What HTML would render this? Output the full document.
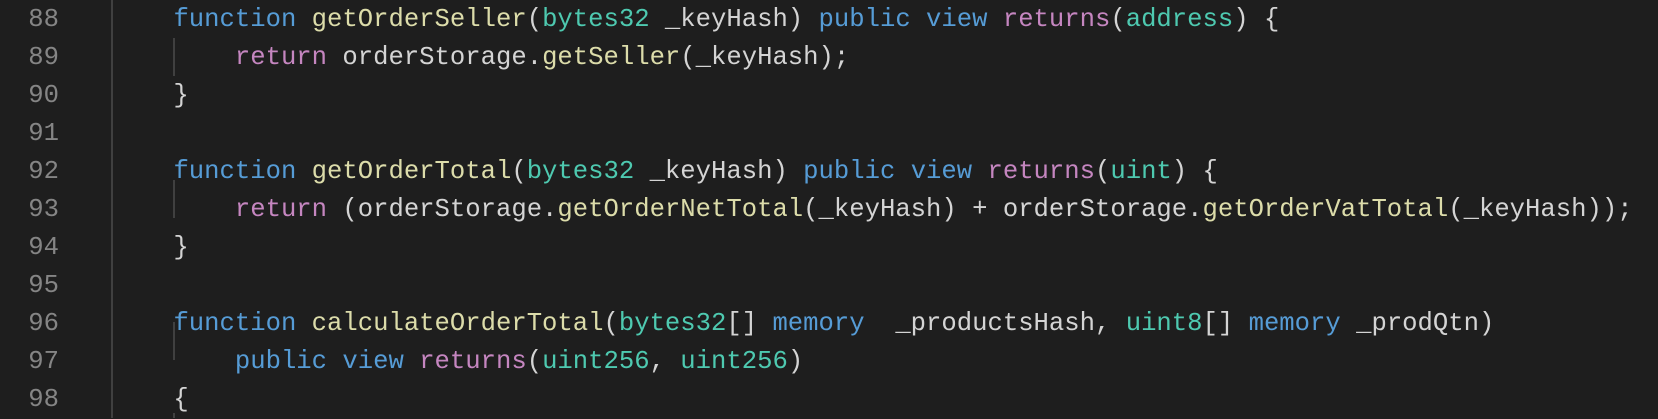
<!DOCTYPE html>
<html><head><meta charset="utf-8"><style>
html,body{margin:0;padding:0;background:#1e1e1e;width:1658px;height:418px;overflow:hidden}
.l{position:absolute;left:0;height:38px;line-height:38px;font-family:"Liberation Mono",monospace;font-size:25.6px;white-space:pre;color:#d4d4d4}
.n{position:absolute;left:0;width:59px;text-align:right;color:#858585}
.c{position:absolute;left:112px}
.k{color:#569cd6}.f{color:#dcdcaa}.t{color:#4ec9b0}.r{color:#c586c0}
.g{position:absolute;width:2px;background:#404040}
</style></head><body>
<div class="g" style="left:111px;top:0;height:418px"></div>
<div class="g" style="left:173px;top:38px;height:38px"></div>
<div class="g" style="left:173px;top:180px;height:38px"></div>
<div class="g" style="left:173px;top:322px;height:38px"></div>
<div class="g" style="left:173px;top:413px;height:5px"></div>
<div class="l" style="top:1px"><span class="n">88</span><span class="c">    <span class="k">function</span> <span class="f">getOrderSeller</span>(<span class="t">bytes32</span> _keyHash) <span class="k">public</span> <span class="k">view</span> <span class="r">returns</span>(<span class="t">address</span>) {</span></div>
<div class="l" style="top:39px"><span class="n">89</span><span class="c">        <span class="r">return</span> orderStorage.<span class="f">getSeller</span>(_keyHash);</span></div>
<div class="l" style="top:77px"><span class="n">90</span><span class="c">    }</span></div>
<div class="l" style="top:115px"><span class="n">91</span></div>
<div class="l" style="top:153px"><span class="n">92</span><span class="c">    <span class="k">function</span> <span class="f">getOrderTotal</span>(<span class="t">bytes32</span> _keyHash) <span class="k">public</span> <span class="k">view</span> <span class="r">returns</span>(<span class="t">uint</span>) {</span></div>
<div class="l" style="top:191px"><span class="n">93</span><span class="c">        <span class="r">return</span> (orderStorage.<span class="f">getOrderNetTotal</span>(_keyHash) + orderStorage.<span class="f">getOrderVatTotal</span>(_keyHash));</span></div>
<div class="l" style="top:229px"><span class="n">94</span><span class="c">    }</span></div>
<div class="l" style="top:267px"><span class="n">95</span></div>
<div class="l" style="top:305px"><span class="n">96</span><span class="c">    <span class="k">function</span> <span class="f">calculateOrderTotal</span>(<span class="t">bytes32</span>[] <span class="k">memory</span>  _productsHash, <span class="t">uint8</span>[] <span class="k">memory</span> _prodQtn)</span></div>
<div class="l" style="top:343px"><span class="n">97</span><span class="c">        <span class="k">public</span> <span class="k">view</span> <span class="r">returns</span>(<span class="t">uint256</span>, <span class="t">uint256</span>)</span></div>
<div class="l" style="top:381px"><span class="n">98</span><span class="c">    {</span></div>
</body></html>
